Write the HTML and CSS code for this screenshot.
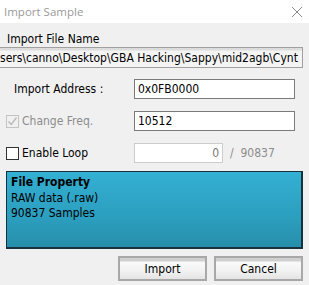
FILE: index.html
```html
<!DOCTYPE html>
<html lang="en">
<head>
    <meta charset="UTF-8">
    <title>Import Sample</title>
    <link rel="stylesheet" href="styles.css">
</head>
<body>
    <div class="titlebar">
        <span class="title">Import Sample</span>
        <svg class="close" width="12" height="12" viewBox="0 0 12 12">
            <path d="M1 1 L11 11 M11 1 L1 11" stroke="#8a8a8a" stroke-width="1" fill="none"/>
        </svg>
    </div>

    <div class="dialog">
        <div class="section-label">Import File Name</div>
        <div class="path-field"><span>sers\canno\Desktop\GBA Hacking\Sappy\mid2agb\Cynt</span></div>

        <div class="form">
            <div class="row">
                <label class="label plain">Import Address :</label>
                <div class="input">0x0FB0000</div>
            </div>
            <div class="row">
                <label class="label disabled">
                    <span class="check checked">
                        <svg width="11" height="11" viewBox="0 0 11 11">
                            <path d="M1.5 5.5 L4.2 8.5 L9.5 1.5" stroke="#b8b8b8" stroke-width="1.3" fill="none"/>
                        </svg>
                    </span>
                    Change Freq.
                </label>
                <div class="input">10512</div>
            </div>
            <div class="row">
                <label class="label">
                    <span class="check"></span>
                    Enable Loop
                </label>
                <div class="input short off">0</div>
                <span class="total">/ &nbsp;90837</span>
            </div>
        </div>

        <div class="property">
            <div class="prop-title">File Property</div>
            <div>RAW data (.raw)</div>
            <div>90837 Samples</div>
        </div>

        <div class="buttons">
            <button class="btn">Import</button>
            <button class="btn">Cancel</button>
        </div>
    </div>
</body>
</html>
```

FILE: styles.css
```css
body {
    margin: 0;
    width: 309px;
    height: 285px;
    overflow: hidden;
    background: #f0f0f0;
    font-family: "DejaVu Sans Condensed", "DejaVu Sans", sans-serif;
    font-stretch: condensed;
    font-size: 12px;
    color: #000;
}

.titlebar {
    height: 23px;
    background: #fff;
    display: flex;
    align-items: center;
    justify-content: space-between;
    padding: 0 6px 0 4px;
}

.title {
    font-family: "Open Sans", sans-serif;
    font-stretch: normal;
    font-size: 11.5px;
    color: #9a9a9a;
}

.close {
    margin-top: 1px;
}

.dialog {
    padding: 8px 6px 0 6px;
}

.section-label {
    padding-left: 1px;
    height: 16px;
    line-height: 16px;
}

.path-field {
    margin: 0 0 0 -6px;
    height: 19px;
    border: 1px solid #a0a0a0;
    border-left: none;
    background: linear-gradient(#dcdcdc 0, #dcdcdc 2px, #f4f4f4 3px, #f4f4f4);
    overflow: hidden;
    white-space: nowrap;
    font-size: 12px;
    line-height: 20px;
}

.form {
    margin-top: 11px;
    display: flex;
    flex-direction: column;
    gap: 12px;
}

.row {
    display: flex;
    align-items: center;
    height: 20px;
}

.label {
    width: 128px;
    display: flex;
    align-items: center;
    gap: 3px;
}

.label.plain {
    padding-left: 8px;
    width: 120px;
}

.label.disabled {
    color: #8c8c8c;
}

.check {
    width: 11px;
    height: 11px;
    border: 1px solid #333;
    background: #fff;
    display: flex;
}

.check.checked {
    border-color: #c4c4c4;
    background: #f0f0f0;
}

.input {
    flex: 1;
    height: 18px;
    border: 1px solid #7a7a7a;
    background: #fff;
    padding: 0 3px;
    line-height: 18px;
    margin-right: 8px;
}

.input.short {
    flex: 0 0 auto;
    width: 81px;
    text-align: right;
    border-color: #cccccc;
    color: #777;
    margin-right: 0;
}

.total {
    margin-left: 7px;
    color: #8c8c8c;
}

.property {
    margin-top: 8px;
    height: 72px;
    border: 2px solid #17323c;
    border-width: 1px 2px 2px 1px;
    background: linear-gradient(#33b0d3, #2c9ebf 60%, #268fab);
    padding: 3px 4px 0 4px;
    line-height: 15.5px;
}

.prop-title {
    font-weight: bold;
}

.buttons {
    margin-top: 7px;
    display: flex;
    justify-content: flex-end;
    gap: 7px;
}

.btn {
    width: 89px;
    height: 25px;
    border: 2px solid #a8a8a8;
    background: linear-gradient(#d0d0d0 0, #d0d0d0 3px, #fafafa 4px, #f2f2f2 60%, #e4e4e4);
    font-family: inherit;
    font-stretch: condensed;
    font-size: 12px;
    color: #000;
    padding: 0;
}
```
